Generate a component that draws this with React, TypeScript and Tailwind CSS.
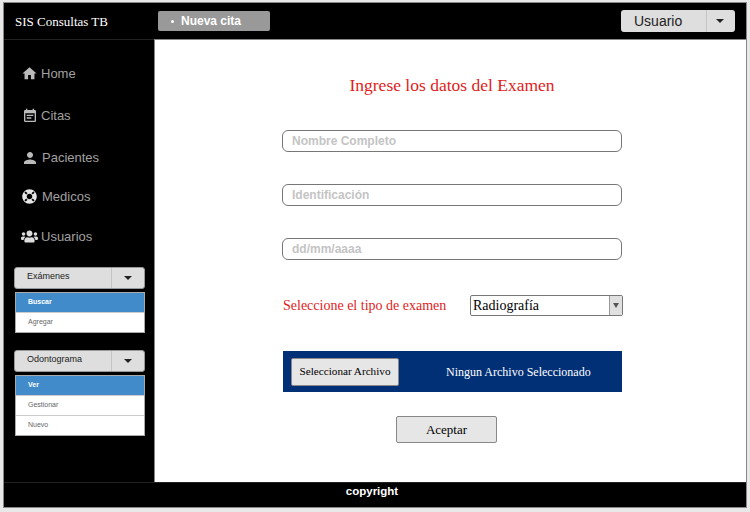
import { FaLifeRing, FaUsers } from 'react-icons/fa';
import { MdEventNote, MdHome, MdPerson } from 'react-icons/md';

const sans = "font-['Liberation_Sans',Arial,sans-serif]";
const serif = "font-['Liberation_Serif','Times_New_Roman',serif]";

function Caret() {
  return <span className="block h-0 w-0 border-x-[4px] border-t-[4px] border-x-transparent border-t-[#222]" />;
}

function NavItem({ icon, label, className }: { icon: React.ReactNode; label: string; className: string }) {
  return (
    <div className={`flex h-[17px] items-center text-[13px] text-[#a0a0a0] ${className}`}>
      {icon}
      <span>{label}</span>
    </div>
  );
}

function MenuGroup({ title, items }: { title: string; items: string[] }) {
  return (
    <div className="w-[131px]">
      <div className="flex h-[22px] rounded-[3px] border border-[#999] bg-[#dedede] text-[9px] text-[#222]">
        <div className="flex flex-1 items-center pb-[2px] pl-[12px]">{title}</div>
        <div className="flex w-[33px] items-center justify-center border-l border-[#c4c4c4]">
          <Caret />
        </div>
      </div>
      <div className="mt-[3px] ml-[1px] w-[130px] border border-[#aaa] bg-white text-[7px]">
        {items.map((item, i) => (
          <div
            key={item}
            className={
              i === 0
                ? 'flex h-[19px] items-center bg-[#428bca] pl-[12px] font-bold text-white'
                : 'flex h-[20px] items-center border-t border-[#ccc] pl-[12px] text-[#666]'
            }
          >
            {item}
          </div>
        ))}
      </div>
    </div>
  );
}

function TextField({ placeholder }: { placeholder: string }) {
  return (
    <div className={`flex h-[22px] w-[340px] items-center rounded-[6px] border border-[#777] bg-white pl-[9px] text-xs font-bold text-[#c4c4c4] ${sans}`}>
      {placeholder}
    </div>
  );
}

export default function App() {
  return (
    <div className={`h-[512px] w-[750px] overflow-hidden bg-[#e8e8e8] pt-[2px] pl-[3px] ${sans}`}>
      <div className="flex h-[506px] w-[744px] flex-col border border-[#888] bg-black">
        <header className="flex h-[36px] shrink-0 items-center bg-black">
          <div className={`w-[154px] pt-[2px] pl-[11px] text-[13px] text-white ${serif}`}>SIS Consultas TB</div>
          <div className="flex h-[20px] w-[112px] items-center rounded-[2px] bg-[#999] pl-[13px] text-xs font-bold text-white">
            <span className="mr-[7px] h-[3px] w-[3px] rounded-full bg-white" />
            Nueva cita
          </div>
          <div className="mr-[11px] ml-auto flex h-[22px] w-[114px] rounded-[3px] bg-[#dedede] text-sm text-[#222]">
            <div className="flex flex-1 items-center pl-[13px]">Usuario</div>
            <div className="flex w-[29px] items-center justify-center border-l border-[#c4c4c4] pr-[2px]">
              <Caret />
            </div>
          </div>
        </header>

        <div className="flex min-h-0 flex-1">
          <aside className="w-[150px] shrink-0 border-t border-[#222] bg-black">
            <div className="pt-[25px]">
              <NavItem className="mb-[25px] pl-[17px]" icon={<MdHome className="mr-[3px] text-[17px] text-[#bbb]" />} label="Home" />
              <NavItem className="mb-[25px] pl-[18px]" icon={<MdEventNote className="mr-[3px] text-[16px] text-[#bbb]" />} label="Citas" />
              <NavItem className="mb-[22px] pl-[17px]" icon={<MdPerson className="mr-[3px] text-[18px] text-[#bbb]" />} label="Pacientes" />
              <NavItem className="mb-[23px] pl-[18px]" icon={<FaLifeRing className="mr-[5px] text-[15px] text-white/90" />} label="Medicos" />
              <NavItem className="pl-[17px]" icon={<FaUsers className="mr-[3px] text-[17px] text-[#ddd]" />} label="Usuarios" />
            </div>
            <div className="mt-[22px] flex flex-col gap-[17px] pl-[10px]">
              <MenuGroup title="Exámenes" items={['Buscar', 'Agregar']} />
              <MenuGroup title="Odontograma" items={['Ver', 'Gestionar', 'Nuevo']} />
            </div>
          </aside>

          <main className={`flex-1 border-t border-l border-[#888] bg-white ${serif}`}>
            <div className="flex flex-col pl-[127px]">
              <h1 className="mt-[35px] w-[340px] text-center text-[17.5px] leading-[21px] font-normal text-[#e01c1c]">Ingrese los datos del Examen</h1>
              <div className="mt-[34px] flex flex-col gap-[32px]">
                <TextField placeholder="Nombre Completo" />
                <TextField placeholder="Identificación" />
                <TextField placeholder="dd/mm/aaaa" />
              </div>
              <div className="mt-[34px] ml-[1px] flex h-[22px] w-[340px] items-center">
                <span className="w-[187px] pt-[1px] text-sm text-[#e01c1c]">Seleccione el tipo de examen</span>
                <div className="flex h-[21px] w-[153px] items-center justify-between rounded-[2px] border border-[#777] bg-white pl-[2px] text-sm text-black">
                  <span className="pt-[1px]">Radiografía</span>
                  <div className="flex h-full w-[13px] items-center justify-center border-l border-[#999] bg-[#e0e0e0]">
                    <span className="block h-0 w-0 border-x-[3px] border-t-[5px] border-x-transparent border-t-[#555]" />
                  </div>
                </div>
              </div>
              <div className="mt-[35px] ml-[1px] flex h-[41px] w-[339px] items-center bg-[#023076] pl-[8px]">
                <div className="flex h-[28px] w-[108px] items-center justify-center rounded-[2px] border border-[#888] bg-[#e6e6e6] text-[11.2px] text-black">
                  Seleccionar Archivo
                </div>
                <span className="ml-[47px] text-xs text-white">Ningun Archivo Seleccionado</span>
              </div>
              <div className="mt-[24px] flex w-[340px] pl-[114px]">
                <div className="flex h-[27px] w-[101px] items-center justify-center rounded-[2px] border border-[#888] bg-[#e6e6e6] text-[13px] text-black">
                  Aceptar
                </div>
              </div>
            </div>
          </main>
        </div>

        <footer className="flex h-[25px] shrink-0 justify-center border-t border-[#222] bg-black pr-[6px] text-[11.5px] font-bold text-white">copyright</footer>
      </div>
    </div>
  );
}
